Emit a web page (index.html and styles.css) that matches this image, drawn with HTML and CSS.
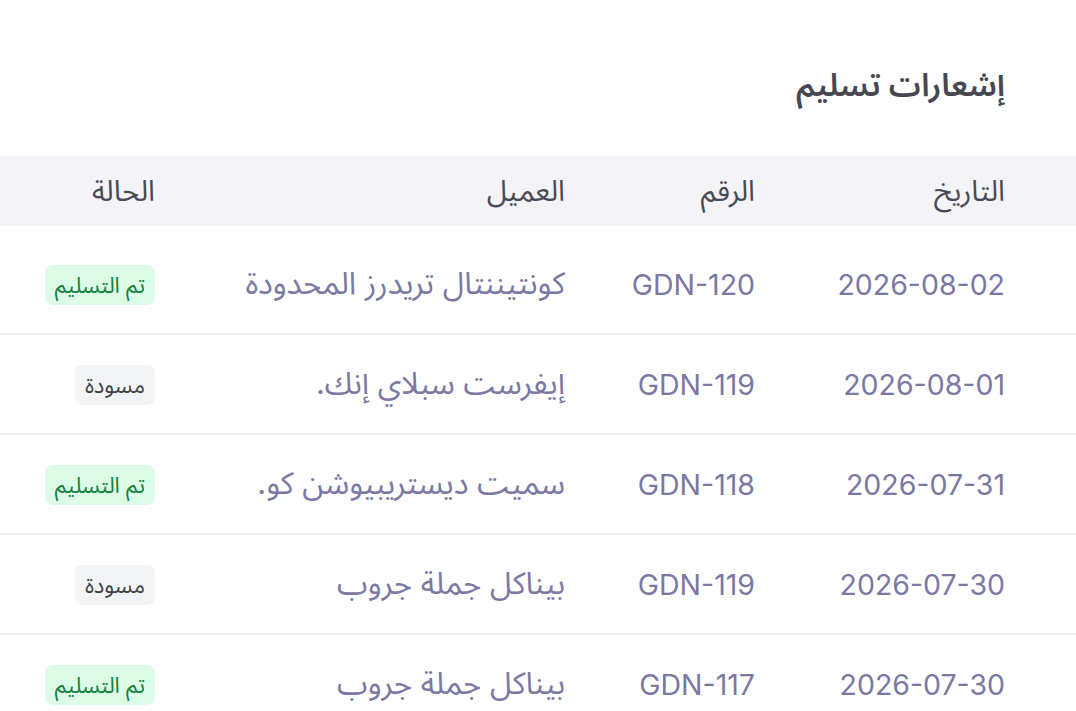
FILE: index.html
```html
<!DOCTYPE html>
<html lang="ar" dir="rtl">
<head>
<meta charset="utf-8">
<title>إشعارات تسليم</title>
<link rel="stylesheet" href="styles.css">
</head>
<body>
<main class="page">
  <h1 class="title">إشعارات تسليم</h1>
  <div class="table">
    <div class="row head">
      <div class="cell">التاريخ</div>
      <div class="cell">الرقم</div>
      <div class="cell">العميل</div>
      <div class="cell">الحالة</div>
    </div>
    <div class="body">
      <div class="row">
        <div class="cell num">2026-08-02</div>
        <div class="cell num">GDN-120</div>
        <div class="cell">كونتيننتال تريدرز المحدودة</div>
        <div class="cell"><span class="badge done">تم التسليم</span></div>
      </div>
      <div class="row">
        <div class="cell num">2026-08-01</div>
        <div class="cell num">GDN-119</div>
        <div class="cell">إيفرست سبلاي إنك.</div>
        <div class="cell"><span class="badge draft">مسودة</span></div>
      </div>
      <div class="row">
        <div class="cell num">2026-07-31</div>
        <div class="cell num">GDN-118</div>
        <div class="cell">سميت ديستريبيوشن كو.</div>
        <div class="cell"><span class="badge done">تم التسليم</span></div>
      </div>
      <div class="row">
        <div class="cell num">2026-07-30</div>
        <div class="cell num">GDN-119</div>
        <div class="cell">بيناكل جملة جروب</div>
        <div class="cell"><span class="badge draft">مسودة</span></div>
      </div>
      <div class="row">
        <div class="cell num">2026-07-30</div>
        <div class="cell num">GDN-117</div>
        <div class="cell">بيناكل جملة جروب</div>
        <div class="cell"><span class="badge done">تم التسليم</span></div>
      </div>
    </div>
  </div>
</main>
</body>
</html>
```

FILE: styles.css
```css
* { box-sizing: border-box; }
html, body { margin: 0; padding: 0; background: #ffffff; }
body {
  font-family: Inter, "Noto Sans Arabic", "DejaVu Sans", sans-serif;
  color: #3f3f46;
}
.page { padding-top: 65px; }
.title {
  margin: 0 71px 51px 0;
  font-size: 32px;
  line-height: 40px;
  font-weight: 600;
  color: #474751;
}
.row {
  display: grid;
  grid-template-columns: 250px 190px 410px 115px;
  align-items: center;
  padding: 0 71px 0 40px;
  height: 100px;
  border-bottom: 2px solid #f2f2f4;
}
.row.head {
  height: 70px;
  background: #f4f4f8;
  border-bottom: none;
  font-size: 29px;
  font-weight: 400;
  color: #4a4a55;
}
.body { padding-top: 9px; }
.body .row {
  font-size: 31px;
  color: #7b78a3;
}
.cell { text-align: right; white-space: nowrap; }
.num { font-size: 28.5px; }
.badge {
  display: inline-block;
  font-size: 22px;
  line-height: 28px;
  padding: 6px 10px;
  border-radius: 8px;
}
.badge.done { background: #dcfce7; color: #15803d; }
.badge.draft { background: #f3f4f6; color: #3f3f46; }
```
